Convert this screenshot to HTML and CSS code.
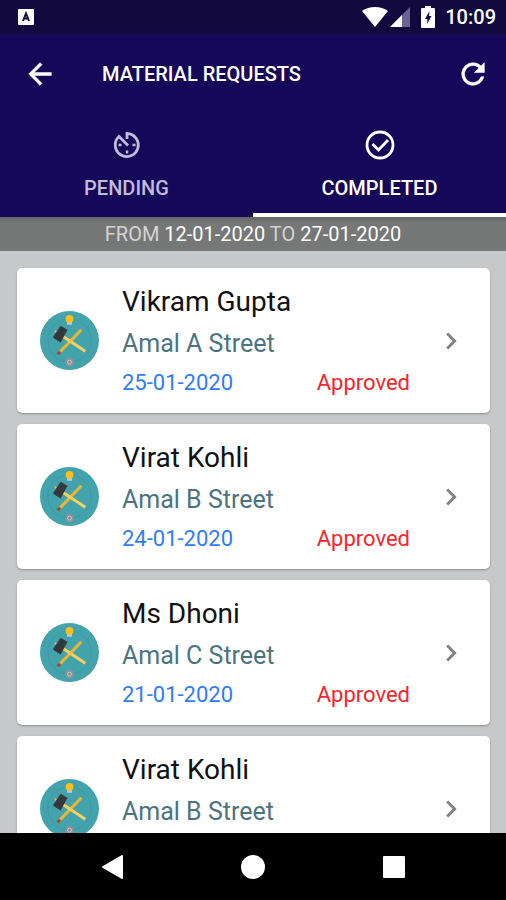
FILE: index.html
```html
<!DOCTYPE html>
<html lang="en">
<head>
<meta charset="UTF-8">
<meta name="viewport" content="width=device-width, initial-scale=1.0">
<title>Material Requests</title>
<link rel="stylesheet" href="styles.css">
</head>

<body>
  <!-- shared icons -->
  <svg class="defs" width="0" height="0">
    <symbol id="tools" viewBox="0 0 60 60">
      <circle cx="30" cy="30" r="30" fill="#43a3ad"/>
      <circle cx="30" cy="30" r="22" fill="none" stroke="#3b98a3" stroke-width="1"/>
      <path d="M27.500 11h5v3h-5z" fill="#c3c9cb"/>
      <circle cx="30" cy="8" r="4" fill="#fbbf1c"/>
      <path d="M42 19L19 43" stroke="#eeb62d" stroke-width="3"/>
      <path d="M20.500 41.500L18 44" stroke="#984a30" stroke-width="3"/>
      <path d="M22 25L46 41" stroke="#f6cf62" stroke-width="3"/>
      <path d="M15 20l3 3" stroke="#e2b33e" stroke-width="2"/>
      <path d="M21 15l7 4-7 13-8-5z" fill="#35383d"/>
      <circle cx="30" cy="52" r="4.500" fill="#8d9297"/>
      <circle cx="30" cy="52" r="2" fill="none" stroke="#c3c6c9" stroke-width="1"/>
    </symbol>
    <symbol id="chevron" viewBox="0 0 24 24">
      <path d="M10 6L8.590 7.410 13.170 12l-4.580 4.590L10 18l6-6z" fill="#828282"/>
    </symbol>
  </svg>

  <div class="status">
    <svg class="app-icon" viewBox="0 0 16 16"><rect width="16" height="16" rx="1" fill="#fff"/><path d="M5 12L8 4.500L11 12M6 9.500h4" fill="none" stroke="#17103f" stroke-width="2"/></svg>
    <div class="status-right">
      <svg class="wifi" viewBox="0 0 26 20"><path d="M13 20L0 4Q5.500 0 13 0T26 4z" fill="#fff"/></svg>
      <svg class="signal" viewBox="0 0 20 20"><path d="M20 0v20H0z" fill="#6a6390"/><path d="M12 8v12H0z" fill="#fff"/></svg>
      <svg class="battery" viewBox="0 0 14 22"><path d="M4 0h6v2h3q1 0 1 1v18q0 1-1 1H1q-1 0-1-1V3q0-1 1-1h3z" fill="#fff"/><path d="M8.500 5L4 13h2.500l-.5 5L10.500 10H8z" fill="#120a3f"/></svg>
      <span class="clock">10:09</span>
    </div>
  </div>

  <header class="header">
    <div class="toolbar">
      <button class="icon-btn" aria-label="Back">
        <svg viewBox="0 0 24 24"><path d="M20 11H7.830l5.590-5.590L12 4l-8 8 8 8 1.410-1.410L7.830 13H20z" fill="#fff" stroke="#fff" stroke-width=".4"/></svg>
      </button>
      <h1>MATERIAL REQUESTS</h1>
      <button class="icon-btn" aria-label="Refresh">
        <svg viewBox="0 0 24 24"><path d="M17.650 6.350A7.958 7.958 0 0 0 12 4a8 8 0 1 0 7.730 10h-2.080A6 6 0 1 1 12 6c1.660 0 3.140.69 4.220 1.780L13 11h7V4z" fill="#fff" stroke="#fff" stroke-width=".4"/></svg>
      </button>
    </div>
    <nav class="tabs">
      <button class="tab">
        <svg viewBox="0 0 30 30" fill="none" stroke="#c0bcd9" stroke-width="2.800"><path d="M15 9V3.500A11.500 11.500 0 1 1 7 6.500L16 15.500"/><path d="M15 20.500v3M20.500 15h3M6.500 15h3" stroke-width="2.400"/></svg>
        <span>PENDING</span>
      </button>
      <button class="tab active">
        <svg viewBox="0 0 30 30" fill="none" stroke="#fff" stroke-width="2.800"><circle cx="15" cy="15" r="13"/><path d="M7.500 14l6 6L23 10"/></svg>
        <span>COMPLETED</span>
      </button>
    </nav>
  </header>

  <div class="range">FROM <b>12-01-2020</b> TO <b>27-01-2020</b></div>

  <main class="list">
    <a class="card" href="#">
      <svg class="avatar"><use href="#tools"/></svg>
      <div class="info">
        <div class="name">Vikram Gupta</div>
        <div class="street">Amal A Street</div>
        <div class="row"><span class="date">25-01-2020</span><span class="state">Approved</span></div>
      </div>
      <svg class="chevron"><use href="#chevron"/></svg>
    </a>
    <a class="card" href="#">
      <svg class="avatar"><use href="#tools"/></svg>
      <div class="info">
        <div class="name">Virat Kohli</div>
        <div class="street">Amal B Street</div>
        <div class="row"><span class="date">24-01-2020</span><span class="state">Approved</span></div>
      </div>
      <svg class="chevron"><use href="#chevron"/></svg>
    </a>
    <a class="card" href="#">
      <svg class="avatar"><use href="#tools"/></svg>
      <div class="info">
        <div class="name">Ms Dhoni</div>
        <div class="street">Amal C Street</div>
        <div class="row"><span class="date">21-01-2020</span><span class="state">Approved</span></div>
      </div>
      <svg class="chevron"><use href="#chevron"/></svg>
    </a>
    <a class="card" href="#">
      <svg class="avatar"><use href="#tools"/></svg>
      <div class="info">
        <div class="name">Virat Kohli</div>
        <div class="street">Amal B Street</div>
      </div>
      <svg class="chevron"><use href="#chevron"/></svg>
    </a>
  </main>

  <footer class="navbar">
    <button aria-label="Back"><svg viewBox="0 0 24 24"><path d="M22 1v22L3 12z" fill="#fff" stroke="#fff" stroke-width="2" stroke-linejoin="round"/></svg></button>
    <button aria-label="Home"><svg viewBox="0 0 24 24"><circle cx="12" cy="12" r="12" fill="#fff"/></svg></button>
    <button aria-label="Recent apps"><svg viewBox="0 0 24 24"><rect x="1" y="1" width="22" height="22" rx="1" fill="#fff"/></svg></button>
  </footer>
</body>
</html>
```
FILE: styles.css
```css
* {
  box-sizing: border-box;
}

body {
  margin: 0;
  height: 100vh;
  display: flex;
  flex-direction: column;
  font-family: Roboto, "Liberation Sans", sans-serif;
  background: #c7c8ca;
  overflow: hidden;
}

button {
  border: 0;
  padding: 0;
  background: none;
  font: inherit;
  color: inherit;
}

svg {
  display: block;
  flex: none;
}

.defs {
  position: absolute;
}

/* status bar */
.status {
  flex: none;
  height: 34px;
  display: flex;
  align-items: center;
  justify-content: space-between;
  padding: 0 10px 0 18px;
  background: #120a3f;
  color: #fff;
}
.app-icon {
  width: 16px;
  height: 16px;
}
.status-right {
  display: flex;
  align-items: center;
}
.wifi {
  width: 26px;
  height: 20px;
}
.signal {
  width: 20px;
  height: 20px;
  margin: 0 11px 0 2px;
}
.battery {
  width: 14px;
  height: 22px;
}
.clock {
  margin-left: 10px;
  font-size: 20px;
  line-height: 36px;
  font-weight: 500;
}

/* toolbar and tabs */
.header {
  flex: none;
  background: #150859;
  color: #fff;
}
.toolbar {
  height: 79px;
  display: flex;
  align-items: center;
  padding: 0 16px 0 23px;
}
.toolbar h1 {
  flex: 1;
  margin: 0 0 0 45px;
  font-size: 20px;
  font-weight: 500;
}
.icon-btn svg {
  width: 34px;
  height: 34px;
}
.tabs {
  display: flex;
}
.tab {
  flex: 1;
  height: 104px;
  padding-top: 17px;
  display: flex;
  flex-direction: column;
  align-items: center;
  gap: 16px;
  border-bottom: 4px solid transparent;
  color: #c0bcd9;
  font-size: 20px;
  font-weight: 500;
  line-height: 24px;
}
.tab svg {
  width: 30px;
  height: 30px;
}
.tab.active {
  border-color: #fff;
  color: #fff;
}

.range {
  flex: none;
  height: 34px;
  line-height: 34px;
  text-align: center;
  font-size: 20px;
  color: #d4d4d4;
  background: linear-gradient(#666, #767777 6px);
}
.range b {
  font-weight: 400;
  color: #fff;
}

/* request cards */
.list {
  flex: 1;
  min-height: 0;
  overflow: hidden;
  padding: 17px 16px 0 17px;
}
.card {
  display: flex;
  align-items: center;
  min-height: 145px;
  margin-bottom: 11px;
  padding: 0 22px 0 23px;
  border-radius: 5px;
  background: #fff;
  box-shadow: 0 1px 2px rgba(0, 0, 0, .3);
  text-decoration: none;
}
.avatar {
  width: 59px;
  height: 59px;
}
.info {
  flex: 1;
  align-self: flex-start;
  padding-top: 14px;
  margin: 0 24px 0 23px;
}
.name {
  font-size: 28px;
  line-height: 40px;
  color: #111;
}
.street {
  font-size: 25px;
  line-height: 44px;
  color: #4b7482;
}
.row {
  display: flex;
  justify-content: space-between;
  font-size: 22px;
  line-height: 34px;
}
.date {
  color: #2f7df6;
}
.state {
  color: #f8242b;
}
.chevron {
  width: 34px;
  height: 34px;
}

/* system buttons */
.navbar {
  flex: none;
  height: 67px;
  display: flex;
  align-items: center;
  justify-content: center;
  gap: 117px;
  background: #000;
}
.navbar svg {
  width: 24px;
  height: 24px;
}
```
